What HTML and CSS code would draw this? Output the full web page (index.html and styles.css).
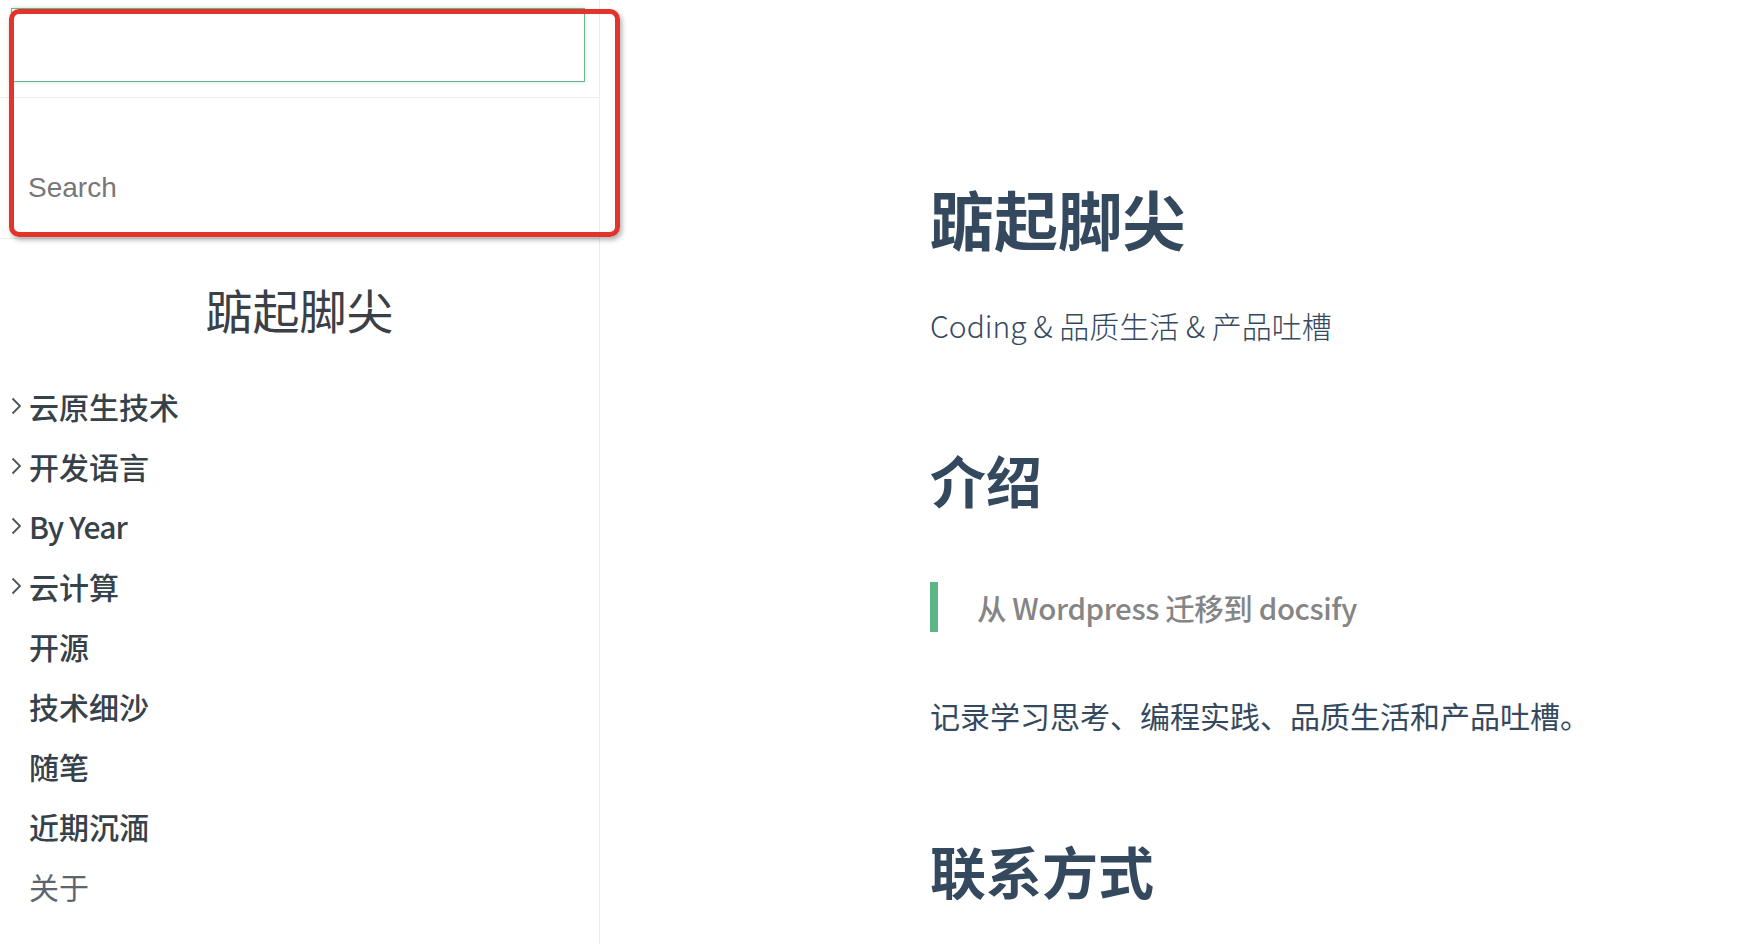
FILE: index.html
```html
<!DOCTYPE html>
<html lang="zh-CN">
<head>
<meta charset="utf-8">
<title>踮起脚尖</title>
<link rel="stylesheet" href="styles.css">
</head>
<body>
<aside class="sidebar">
  <div class="topbar"><div class="focus-box"></div></div>
  <div class="search"><input class="search-input" type="search" placeholder="Search"></div>
  <h1 class="app-name">踮起脚尖</h1>
  <ul class="nav">
    <li class="folder"><svg class="chev" viewBox="0 0 11 18" width="11" height="18"><polyline points="1.5,1.5 9,9 1.5,16.5"/></svg><span>云原生技术</span></li>
    <li class="folder"><svg class="chev" viewBox="0 0 11 18" width="11" height="18"><polyline points="1.5,1.5 9,9 1.5,16.5"/></svg><span>开发语言</span></li>
    <li class="folder"><svg class="chev" viewBox="0 0 11 18" width="11" height="18"><polyline points="1.5,1.5 9,9 1.5,16.5"/></svg><span class="latin">By Year</span></li>
    <li class="folder"><svg class="chev" viewBox="0 0 11 18" width="11" height="18"><polyline points="1.5,1.5 9,9 1.5,16.5"/></svg><span>云计算</span></li>
    <li class="folder"><span>开源</span></li>
    <li class="folder"><span>技术细沙</span></li>
    <li class="folder"><span>随笔</span></li>
    <li class="folder"><span>近期沉湎</span></li>
    <li class="link"><span>关于</span></li>
  </ul>
</aside>
<main class="content">
  <h1 class="h1">踮起脚尖</h1>
  <p class="tagline">Coding &amp; 品质生活 &amp; 产品吐槽</p>
  <h2 class="h2 first">介绍</h2>
  <blockquote class="quote">从 Wordpress 迁移到 docsify</blockquote>
  <p class="para">记录学习思考、编程实践、品质生活和产品吐槽。</p>
  <h2 class="h2 second">联系方式</h2>
</main>
<div class="annot"></div>
</body>
</html>
```
FILE: styles.css
```css
html, body {
  margin: 0;
  padding: 0;
  height: 100%;
}
body {
  display: flex;
  overflow: hidden;
  background: #fff;
  font-family: "Noto Sans CJK SC", "Noto Sans", sans-serif;
  color: #34495e;
}
.sidebar {
  width: 600px;
  flex: none;
  height: 944px;
  box-sizing: border-box;
  border-right: 1px solid #ececec;
  display: flex;
  flex-direction: column;
}
.topbar {
  height: 98px;
  box-sizing: border-box;
  padding: 8px 0 0 11px;
  border-bottom: 1px solid #ececec;
}
.focus-box {
  width: 574px;
  height: 74px;
  box-sizing: border-box;
  border: 1.5px solid #6db68c;
  box-shadow: 0 0 4px rgba(66, 185, 131, 0.35);
}
.search {
  height: 141px;
  box-sizing: border-box;
  border-bottom: 1px solid #ececec;
  display: flex;
  align-items: flex-end;
  padding: 0 0 30px 28px;
}
.search-input {
  border: none;
  outline: none;
  background: transparent;
  padding: 0;
  margin: 0;
  height: 40px;
  line-height: 40px;
  width: 520px;
  font-family: "Liberation Sans", Arial, sans-serif;
  font-size: 28px;
  color: #333;
}
.search-input::placeholder {
  color: #777;
}
.app-name {
  margin: 40px 0 0;
  height: 60px;
  line-height: 60px;
  font-size: 47px;
  font-weight: 400;
  text-align: center;
  color: #3a4046;
}
.nav {
  list-style: none;
  margin: 37px 0 0;
  padding: 0;
}
.nav li {
  height: 60px;
  line-height: 60px;
  display: flex;
  align-items: center;
  padding-left: 29px;
  position: relative;
  font-size: 30px;
  font-weight: 500;
  color: #364149;
}
.nav li .latin {
  letter-spacing: -0.8px;
}
.nav li.link {
  font-weight: 400;
  color: #5b6670;
}
.chev {
  position: absolute;
  left: 11px;
  top: 21px;
  fill: none;
  stroke: #4a545d;
  stroke-width: 1.8;
}
.content {
  flex: 1;
  padding: 177px 0 0 330px;
  box-sizing: border-box;
}
.h1 {
  margin: 0;
  height: 80px;
  line-height: 80px;
  font-size: 64px;
  font-weight: 700;
  color: #34495e;
}
.tagline {
  margin: 44px 0 0;
  height: 48px;
  line-height: 48px;
  font-size: 30px;
  font-weight: 300;
  color: #34495e;
}
.h2 {
  margin: 0;
  height: 70px;
  line-height: 70px;
  font-size: 56px;
  font-weight: 700;
  color: #34495e;
}
.h2.first { margin-top: 95px; }
.h2.second { margin-top: 95px; }
.quote {
  margin: 68px 0 0;
  height: 50px;
  line-height: 50px;
  border-left: 8px solid #5bb585;
  padding-left: 39px;
  font-size: 29.5px;
  letter-spacing: -0.4px;
  font-weight: 500;
  color: #858585;
}
.para {
  margin: 58px 0 0;
  height: 50px;
  line-height: 50px;
  font-size: 30px;
  font-weight: 400;
  color: #34495e;
}
.annot {
  position: absolute;
  left: 9px;
  top: 9px;
  width: 611px;
  height: 228px;
  box-sizing: border-box;
  border: 5px solid #e3342b;
  border-radius: 10px;
  box-shadow: 2px 3px 5px rgba(0, 0, 0, 0.3);
}
```
